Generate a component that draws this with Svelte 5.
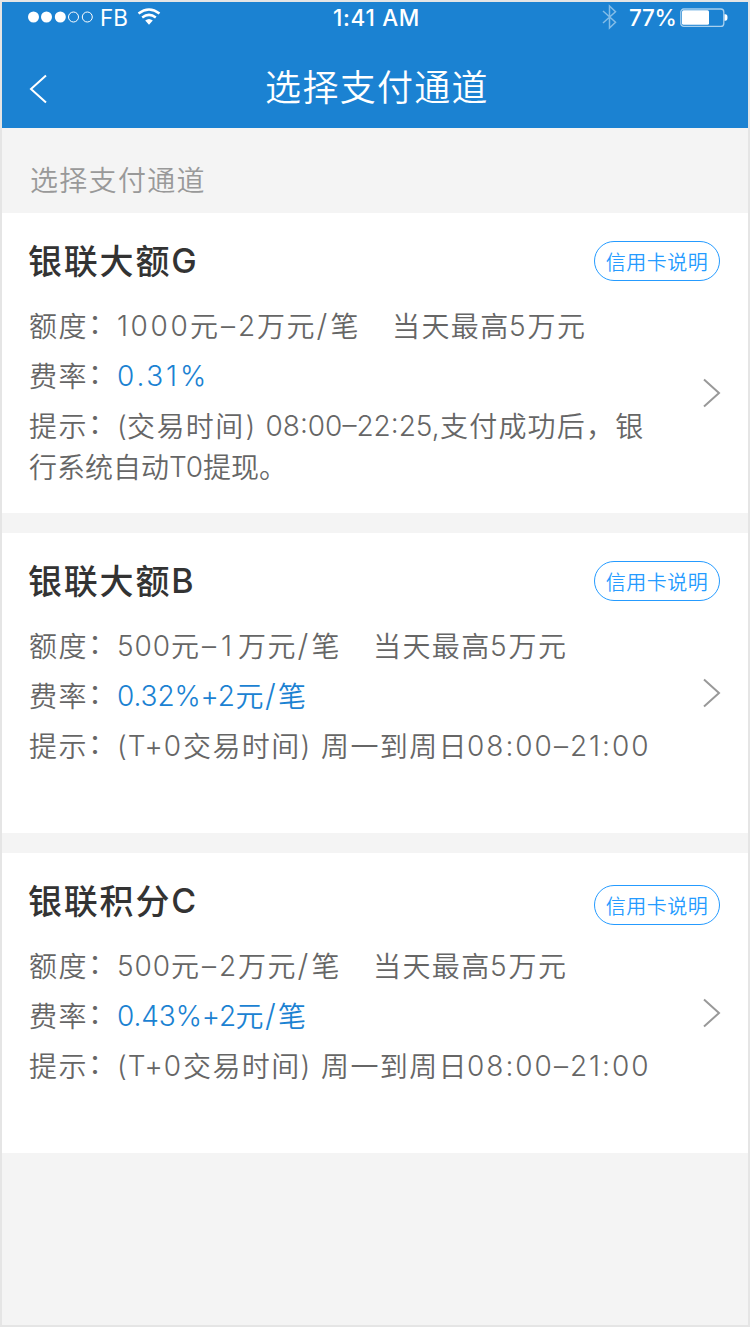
<script>
  // Each run of text: [text, advance width, letter spacing, kind]
  // kind: 1 = latin, 2 = slash, 3 = colon
  const label = (t) => [[t, 59, 1.4], ['：', 29, 0, 3]];
  const limit = (d, dw, ls, dash, n, nw) => [
    ...label('额度'), [d, dw, ls, 1], ['元', 31, 0], ['–', dash, 0, 1], [n, nw, 0, 1],
    ['万元', 58.5, 1.4], ['/', 15, 0, 2], ['笔', 61.5, 0], ['当天最高', 117, 1.4], ['5', 18.5, 0, 1], ['万元', 58, 1.4]
  ];
  const rate = (v) => [...label('费率'), [v, 118.5, -0.1, 1], ['元', 28.5, 0], ['/', 14, 0, 2], ['笔', 29, 0]];
  const hours = [
    ...label('提示'), ['(T+0', 66, 1, 1], ['交易时间', 117.5, 1.4], [')', 20.5, 0, 1],
    ['周一到周日', 146, 1.4], ['08:00–21:00', 190, 2, 1]
  ];
  const channels = [
    {
      name: '银联大额', suffix: 'G',
      limit: limit('1000', 73, 2.6, 17, '2', 19),
      rate: [...label('费率'), ['0.31%', 100, 2.8, 1]],
      tips: [
        [...label('提示'), ['(', 10, 0, 1], ['交易时间', 118.5, 1.4], [')', 20, 0, 1],
          ['08:00–22:25,', 174.5, 0, 1], ['支付成功后，银', 206, 1.2]],
        [['行系统自动', 140, 0], ['T0', 34, 0, 1], ['提现。', 84, 0]]
      ]
    },
    { name: '银联大额', suffix: 'B', limit: limit('500', 54, 0.9, 19, '1', 17), rate: rate('0.32%+2'), tips: [hours] },
    { name: '银联积分', suffix: 'C', limit: limit('500', 54, 0.9, 17, '2', 19), rate: rate('0.43%+2'), tips: [hours], low: true }
  ];
</script>

{#snippet runs(line)}
  {#each line as [text, width, spacing, kind]}
    <span class:latin={kind === 1 || kind === 2} class:slash={kind === 2} class:colon={kind === 3}
      style:width="{width}px" style:letter-spacing="{spacing}px">{text}</span>
  {/each}
{/snippet}

<div class="screen">
  <header>
    <div class="status">
      <div class="left">
        <svg width="68" height="14" viewBox="0 0 68 14" fill="#fff">
          <circle cx="6.5" cy="6" r="5.5" /><circle cx="19.5" cy="6" r="5.5" /><circle cx="33.3" cy="6" r="5.5" />
          <g fill="none" stroke="#fff"><circle cx="46.5" cy="6" r="5" /><circle cx="60.3" cy="6" r="5" /></g>
        </svg>
        <span class="carrier">FB</span>
        <svg class="wifi" width="24" height="18" viewBox="0 0 24 18" fill="none" stroke="#fff" stroke-width="2.5">
          <path d="M1.5 5.5Q12 -2.4 22.5 5.5M5.2 9.4Q12 4.4 18.8 9.4" />
          <path d="M8.2 12.5Q12 9.5 15.8 12.5L12 16.7Z" fill="#fff" stroke="none" />
        </svg>
      </div>
      <div class="time">1:41 AM</div>
      <div class="right">
        <svg class="bt" width="15" height="26" viewBox="0 0 15 26" fill="none" stroke="#83bce7" stroke-width="1.5">
          <path d="M1 7L13.5 18.2L7.5 24V2L13.5 7.8L1 19" />
        </svg>
        <span class="percent">77%</span>
        <svg width="48" height="20" viewBox="0 0 48 20">
          <rect x=".8" y="1" width="43" height="17.4" rx="3" fill="none" stroke="#a8d0ee" stroke-width="1.3" />
          <rect x="2" y="2.2" width="27" height="14.6" rx="1.5" fill="#fff" />
          <path d="M44.5 6.3h.8q2.2 0 2.2 3.2t-2.2 3.2h-.8z" fill="#fff" />
        </svg>
      </div>
    </div>
    <div class="nav">
      <svg width="18" height="30" viewBox="0 0 18 30" fill="none" stroke="#fff" stroke-width="2">
        <path d="M17 1.5L2 15L17 28.5" />
      </svg>
      <h1>选择支付通道</h1>
    </div>
  </header>

  <div class="section">选择支付通道</div>

  {#each channels as c}
    <article>
      <div class="head">
        <h2>{c.name}<b>{c.suffix}</b></h2>
        <button class:low={c.low}>信用卡说明</button>
      </div>
      <div class="body">
        <div class="lines">
          <p>{@render runs(c.limit)}</p>
          <p class="rate">{@render runs(c.rate)}</p>
          {#each c.tips as tip, i}
            <p class:wrap={i > 0}>{@render runs(tip)}</p>
          {/each}
        </div>
        <svg class="chevron" class:first={c.tips.length > 1} width="18" height="30" viewBox="0 0 18 30" fill="none" stroke="#999" stroke-width="2">
          <path d="M1 1.5L16 15L1 28.5" />
        </svg>
      </div>
    </article>
  {/each}
</div>

<style>
  :global(body) { margin: 0; }
  * { box-sizing: border-box; }
  .screen {
    width: 750px; height: 1327px; border: 2px solid #e5e5e5; background: #f4f4f4; overflow: hidden;
    font-family: "Noto Sans CJK SC", sans-serif; font-weight: 350; color: #666;
  }
  header { height: 126px; background: #1b82d2; color: #fff; }
  .status {
    height: 32px; display: grid; grid-template-columns: 1fr auto 1fr; align-items: center;
    padding: 0 20px 0 25px; font: 400 22.5px/32px Inter, sans-serif;
  }
  .left, .right { display: flex; align-items: center; }
  .left svg, .right svg { flex: none; }
  .carrier { margin-left: 5px; width: 37px; letter-spacing: 0; }
  .wifi { margin-top: -2px; }
  .time { font-weight: 450; letter-spacing: .7px; margin-left: -2px; }
  .right { justify-content: flex-end; }
  .bt { margin-top: -2px; }
  .percent { margin: 0 5px 0 12px; width: 46px; font-weight: 450; letter-spacing: -.3px; }
  .nav { height: 94px; display: grid; grid-template-columns: 60px 1fr 60px; align-items: start; }
  .nav svg { margin: 40px 0 0 27px; }
  h1 { margin: 0; padding: 24px 0 0 4px; text-align: center; font-size: 36px; font-weight: 350; line-height: 54px; letter-spacing: 1.3px; }
  .section { height: 85px; padding: 30px 28px 0; font-size: 28px; line-height: 42px; letter-spacing: 1.3px; color: #999; }
  article { height: 300px; margin-bottom: 20px; background: #fff; padding: 0 28px 0 27px; }
  .head { height: 87px; display: flex; justify-content: space-between; align-items: flex-start; }
  h2 { margin: 0 0 0 -1px; padding-top: 22px; line-height: 50px; font-size: 34px; font-weight: 500; letter-spacing: 1.8px; color: #333; display: flex; }
  h2 b { font-family: Inter, sans-serif; font-weight: 460; padding-top: 1px; }
  button {
    margin: 28px 0 0; width: 126px; height: 40px; padding: 1px 0 0; border: 1px solid #259bff; border-radius: 20px;
    background: #fff; color: #259bff; font: inherit; font-size: 20px; letter-spacing: .5px; line-height: 37px; white-space: nowrap;
  }
  button.low { margin-top: 32px; }
  .body { display: flex; justify-content: space-between; align-items: flex-start; }
  p { margin: 0; height: 50px; display: flex; font-size: 28px; line-height: 50px; white-space: nowrap; }
  p.wrap { margin-top: -9px; }
  span { flex: none; display: block; }
  .lines .latin { font-family: Inter, sans-serif; font-weight: 340; padding-top: 1px; }
  .lines .slash { font-size: 31px; font-weight: 300; padding-left: 1px; }
  .colon { margin-top: -3px; }
  .rate span:nth-child(n + 3) { color: #1b82d2; }
  .chevron { flex: none; margin-top: 58px; margin-right: -1px; }
  .chevron.first { margin-top: 78px; }
</style>
